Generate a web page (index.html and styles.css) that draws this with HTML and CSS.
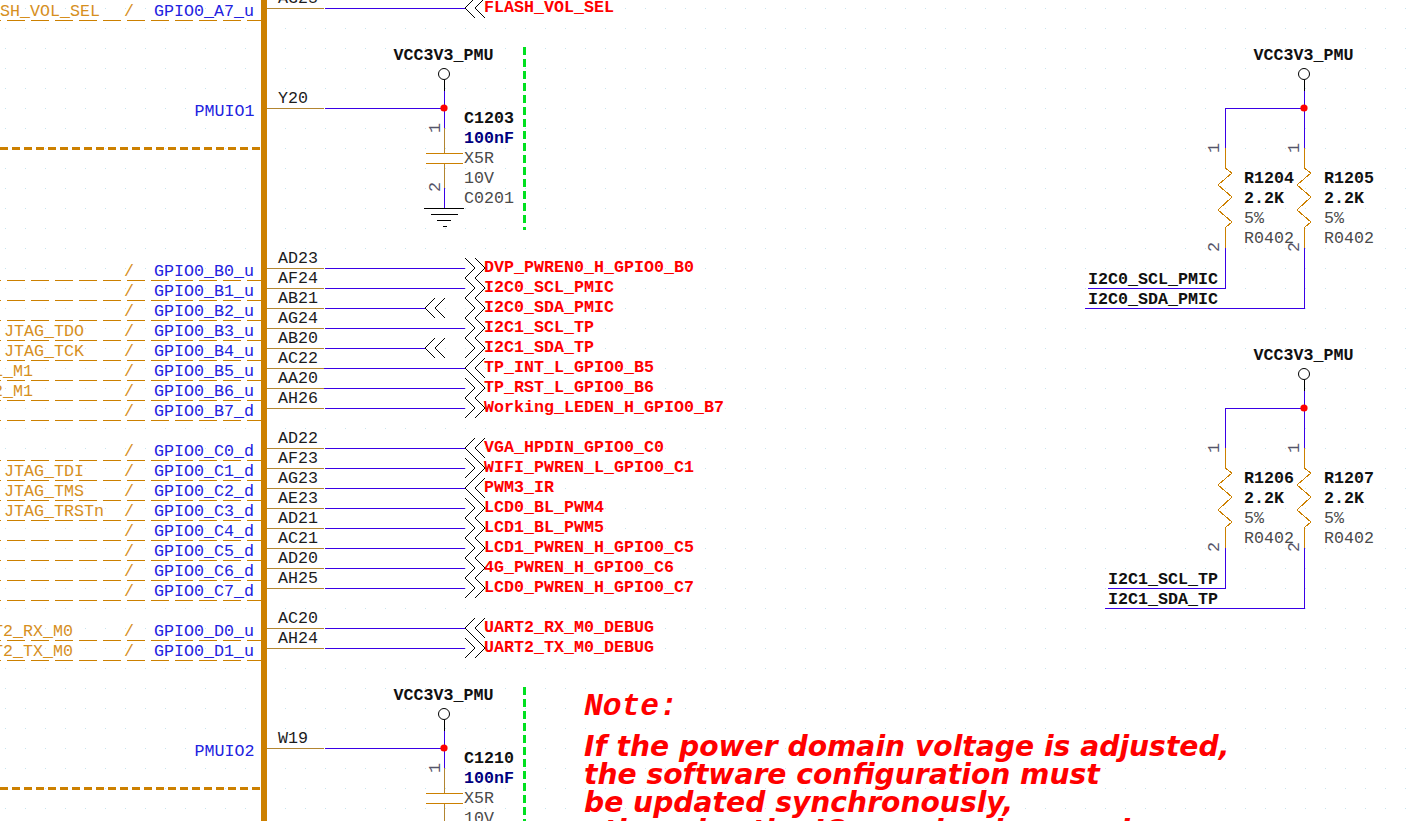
FILE: index.html
```html
<!DOCTYPE html>
<html lang="en">
<head>
<meta charset="utf-8">
<title>Schematic</title>
<link rel="stylesheet" href="styles.css">
</head>
<body>
<svg class="sheet" width="1425" height="821" viewBox="0 0 1425 821" xmlns="http://www.w3.org/2000/svg">
<defs>
<pattern id="grid" x="5" y="8" width="20" height="20" patternUnits="userSpaceOnUse"><rect class="griddot" width="1" height="1"/></pattern>
<g id="cr"><path class="chev" d="M465 -10L475 0L465 10M475 -10L485 0L475 10"/></g>
<g id="cl"><path class="chev" d="M475 -10L465 0L475 10M485 -10L475 0L485 10"/></g>
<g id="cm"><path class="chev" d="M435 -10L425 0L435 10M445 -10L435 0L445 10"/></g>
<g id="dash"><path class="row" d="M-16.7 0H261"/></g>
<g id="res"><path class="comp" d="M0 148V168L7 173L-7 185L7 197L-7 210L7 222L0 228V248"/></g>
</defs>
<rect class="gridfill" width="1425" height="821"/>

<!-- left dashed signal rows -->
<use href="#dash" y="20"/><use href="#dash" y="280"/><use href="#dash" y="300"/><use href="#dash" y="320"/><use href="#dash" y="340"/><use href="#dash" y="360"/><use href="#dash" y="380"/><use href="#dash" y="400"/><use href="#dash" y="420"/><use href="#dash" y="460"/><use href="#dash" y="480"/><use href="#dash" y="500"/><use href="#dash" y="520"/><use href="#dash" y="540"/><use href="#dash" y="560"/><use href="#dash" y="580"/><use href="#dash" y="600"/><use href="#dash" y="640"/><use href="#dash" y="660"/>
<path class="thick" d="M0 148H261M0 788H261"/>

<!-- orange names -->
<g class="t orange">
<text x="-30" y="16">FLASH_VOL_SEL</text>
<text x="4" y="336">JTAG_TDO</text>
<text x="4" y="356">JTAG_TCK</text>
<text x="-37" y="376">PWM1_M1</text>
<text x="-37" y="396">PWM2_M1</text>
<text x="4" y="476">JTAG_TDI</text>
<text x="4" y="496">JTAG_TMS</text>
<text x="4" y="516">JTAG_TRSTn</text>
<text x="-37" y="636">UART2_RX_M0</text>
<text x="-37" y="656">UART2_TX_M0</text>
<text x="124" y="16">/</text>
<text x="124" y="276">/</text><text x="124" y="296">/</text><text x="124" y="316">/</text><text x="124" y="336">/</text><text x="124" y="356">/</text><text x="124" y="376">/</text><text x="124" y="396">/</text><text x="124" y="416">/</text>
<text x="124" y="456">/</text><text x="124" y="476">/</text><text x="124" y="496">/</text><text x="124" y="516">/</text><text x="124" y="536">/</text><text x="124" y="556">/</text><text x="124" y="576">/</text><text x="124" y="596">/</text>
<text x="124" y="636">/</text><text x="124" y="656">/</text>
</g>

<!-- blue GPIO names -->
<g class="t blue">
<text x="154" y="16">GPIO0_A7_u</text>
<text x="194.5" y="116">PMUIO1</text>
<text x="154" y="276">GPIO0_B0_u</text>
<text x="154" y="296">GPIO0_B1_u</text>
<text x="154" y="316">GPIO0_B2_u</text>
<text x="154" y="336">GPIO0_B3_u</text>
<text x="154" y="356">GPIO0_B4_u</text>
<text x="154" y="376">GPIO0_B5_u</text>
<text x="154" y="396">GPIO0_B6_u</text>
<text x="154" y="416">GPIO0_B7_d</text>
<text x="154" y="456">GPIO0_C0_d</text>
<text x="154" y="476">GPIO0_C1_d</text>
<text x="154" y="496">GPIO0_C2_d</text>
<text x="154" y="516">GPIO0_C3_d</text>
<text x="154" y="536">GPIO0_C4_d</text>
<text x="154" y="556">GPIO0_C5_d</text>
<text x="154" y="576">GPIO0_C6_d</text>
<text x="154" y="596">GPIO0_C7_d</text>
<text x="154" y="636">GPIO0_D0_u</text>
<text x="154" y="656">GPIO0_D1_u</text>
<text x="194.5" y="756">PMUIO2</text>
</g>

<!-- package bar and pins -->
<rect class="bar" x="261" y="0" width="6" height="821"/>
<path class="pin" d="M267 8H324M267 108H324M267 268H324M267 288H324M267 308H324M267 328H324M267 348H324M267 368H324M267 388H324M267 408H324M267 448H324M267 468H324M267 488H324M267 508H324M267 528H324M267 548H324M267 568H324M267 588H324M267 628H324M267 648H324M267 748H324"/>
<g class="t dark">
<text x="278" y="3">AG25</text>
<text x="278" y="103">Y20</text>
<text x="278" y="263">AD23</text>
<text x="278" y="283">AF24</text>
<text x="278" y="303">AB21</text>
<text x="278" y="323">AG24</text>
<text x="278" y="343">AB20</text>
<text x="278" y="363">AC22</text>
<text x="278" y="383">AA20</text>
<text x="278" y="403">AH26</text>
<text x="278" y="443">AD22</text>
<text x="278" y="463">AF23</text>
<text x="278" y="483">AG23</text>
<text x="278" y="503">AE23</text>
<text x="278" y="523">AD21</text>
<text x="278" y="543">AC21</text>
<text x="278" y="563">AD20</text>
<text x="278" y="583">AH25</text>
<text x="278" y="623">AC20</text>
<text x="278" y="643">AH24</text>
<text x="278" y="743">W19</text>
</g>

<!-- wires -->
<path class="wire" d="M325 8H465M325 108H444M325 268H465M325 288H465M325 308H425M325 328H465M325 348H425M324 368H465M324 388H465M325 408H465M325 448H465M325 468H465M325 488H465M325 508H465M325 528H465M325 548H465M325 568H465M325 588H465M325 628H465M325 648H465M325 748H444"/>

<!-- off-page connectors -->
<use href="#cl" y="8"/>
<use href="#cr" y="268"/><use href="#cr" y="288"/><use href="#cr" y="308"/><use href="#cm" y="308"/><use href="#cr" y="328"/><use href="#cr" y="348"/><use href="#cm" y="348"/><use href="#cl" y="368"/><use href="#cr" y="388"/><use href="#cr" y="408"/>
<use href="#cl" y="448"/><use href="#cr" y="468"/><use href="#cl" y="488"/><use href="#cr" y="508"/><use href="#cr" y="528"/><use href="#cr" y="548"/><use href="#cr" y="568"/><use href="#cr" y="588"/>
<use href="#cl" y="628"/><use href="#cr" y="648"/>

<g class="t bold red">
<text x="484" y="12">FLASH_VOL_SEL</text>
<text x="484" y="272">DVP_PWREN0_H_GPIO0_B0</text>
<text x="484" y="292">I2C0_SCL_PMIC</text>
<text x="484" y="312">I2C0_SDA_PMIC</text>
<text x="484" y="332">I2C1_SCL_TP</text>
<text x="484" y="352">I2C1_SDA_TP</text>
<text x="484" y="372">TP_INT_L_GPIO0_B5</text>
<text x="484" y="392">TP_RST_L_GPIO0_B6</text>
<text x="484" y="412">Working_LEDEN_H_GPIO0_B7</text>
<text x="484" y="452">VGA_HPDIN_GPIO0_C0</text>
<text x="484" y="472">WIFI_PWREN_L_GPIO0_C1</text>
<text x="484" y="492">PWM3_IR</text>
<text x="484" y="512">LCD0_BL_PWM4</text>
<text x="484" y="532">LCD1_BL_PWM5</text>
<text x="484" y="552">LCD1_PWREN_H_GPIO0_C5</text>
<text x="484" y="572">4G_PWREN_H_GPIO0_C6</text>
<text x="484" y="592">LCD0_PWREN_H_GPIO0_C7</text>
<text x="484" y="632">UART2_RX_M0_DEBUG</text>
<text x="484" y="652">UART2_TX_M0_DEBUG</text>
</g>

<!-- C1203 -->
<g>
<text class="t bold black" x="393.5" y="60">VCC3V3_PMU</text>
<circle class="port" cx="444" cy="74" r="5.5"/>
<path class="black-line" d="M444 80V91"/>
<path class="wire" d="M444 91V128M444 188V208"/>
<path class="pin" d="M444 128V153M444 163V188"/>
<path class="comp" d="M426 153H463M426 163H463"/>
<circle class="junction" cx="444" cy="108" r="3.6"/>
<path class="black-line" d="M424 208H464M431 214H458M437 220H451M443 226H447"/>
<text class="t grey num" transform="translate(440 133) rotate(-90)">1</text>
<text class="t grey num" transform="translate(440 192) rotate(-90)">2</text>
<text class="t bold black" x="464" y="123">C1203</text>
<text class="t bold navy" x="464" y="143">100nF</text>
<text class="t grey" x="464" y="163">X5R</text>
<text class="t grey" x="464" y="183">10V</text>
<text class="t grey" x="464" y="203">C0201</text>
<path class="green" d="M524 47V230"/>
</g>

<!-- C1210 -->
<g>
<text class="t bold black" x="393.5" y="700">VCC3V3_PMU</text>
<circle class="port" cx="444" cy="714" r="5.5"/>
<path class="black-line" d="M444 720V731"/>
<path class="wire" d="M444 731V768"/>
<path class="pin" d="M444 768V793M444 803V821"/>
<path class="comp" d="M426 793H463M426 803H463"/>
<circle class="junction" cx="444" cy="748" r="3.6"/>
<text class="t grey num" transform="translate(440 773) rotate(-90)">1</text>
<text class="t bold black" x="464" y="763">C1210</text>
<text class="t bold navy" x="464" y="783">100nF</text>
<text class="t grey" x="464" y="803">X5R</text>
<text class="t grey" x="464" y="823">10V</text>
<path class="green" d="M524 687V821"/>
</g>

<!-- note -->
<text class="note-head" x="584" y="715">Note:</text>
<g class="note">
<text x="584" y="756">If the power domain voltage is adjusted,</text>
<text x="584" y="784">the software configuration must</text>
<text x="584" y="812">be updated synchronously,</text>
<text x="584" y="840">otherwise the IO may be damaged</text>
</g>

<!-- pull-ups I2C0 -->
<g>
<text class="t bold black" x="1253.5" y="60">VCC3V3_PMU</text>
<circle class="port" cx="1304" cy="74" r="5.5"/>
<path class="black-line" d="M1304 80V91"/>
<path class="wire" d="M1304 91V148M1304 108H1225V148M1225 248V288H1088M1304 248V308H1085"/>
<use href="#res" x="1225"/><use href="#res" x="1304"/>
<circle class="junction" cx="1304" cy="108" r="3.6"/>
<text class="t grey num" transform="translate(1219 153) rotate(-90)">1</text>
<text class="t grey num" transform="translate(1219 252) rotate(-90)">2</text>
<text class="t grey num" transform="translate(1299 153) rotate(-90)">1</text>
<text class="t grey num" transform="translate(1299 252) rotate(-90)">2</text>
<text class="t bold black" x="1244" y="183">R1204</text>
<text class="t bold black" x="1244" y="203">2.2K</text>
<text class="t grey" x="1244" y="223">5%</text>
<text class="t grey" x="1244" y="243">R0402</text>
<text class="t bold black" x="1324" y="183">R1205</text>
<text class="t bold black" x="1324" y="203">2.2K</text>
<text class="t grey" x="1324" y="223">5%</text>
<text class="t grey" x="1324" y="243">R0402</text>
<text class="t bold black" x="1088" y="284">I2C0_SCL_PMIC</text>
<text class="t bold black" x="1088" y="304">I2C0_SDA_PMIC</text>
</g>

<!-- pull-ups I2C1 -->
<g>
<text class="t bold black" x="1253.5" y="360">VCC3V3_PMU</text>
<circle class="port" cx="1304" cy="374" r="5.5"/>
<path class="black-line" d="M1304 380V391"/>
<path class="wire" d="M1304 391V448M1304 408H1225V448M1225 548V588H1108M1304 548V608H1105"/>
<use href="#res" x="1225" y="300"/><use href="#res" x="1304" y="300"/>
<circle class="junction" cx="1304" cy="408" r="3.6"/>
<text class="t grey num" transform="translate(1219 453) rotate(-90)">1</text>
<text class="t grey num" transform="translate(1219 552) rotate(-90)">2</text>
<text class="t grey num" transform="translate(1299 453) rotate(-90)">1</text>
<text class="t grey num" transform="translate(1299 552) rotate(-90)">2</text>
<text class="t bold black" x="1244" y="483">R1206</text>
<text class="t bold black" x="1244" y="503">2.2K</text>
<text class="t grey" x="1244" y="523">5%</text>
<text class="t grey" x="1244" y="543">R0402</text>
<text class="t bold black" x="1324" y="483">R1207</text>
<text class="t bold black" x="1324" y="503">2.2K</text>
<text class="t grey" x="1324" y="523">5%</text>
<text class="t grey" x="1324" y="543">R0402</text>
<text class="t bold black" x="1108" y="584">I2C1_SCL_TP</text>
<text class="t bold black" x="1108" y="604">I2C1_SDA_TP</text>
</g>
</svg>
</body>
</html>
```
FILE: styles.css
```css
html, body {
  margin: 0;
  padding: 0;
  background: #fff;
  overflow: hidden;
}
.sheet {
  display: block;
}
.griddot {
  fill: #c4e6f2;
}
.gridfill {
  fill: url(#grid);
}
.t {
  font-family: "Liberation Mono", "Courier New", monospace;
  font-size: 16.667px;
}
.bold {
  font-weight: 700;
}
.orange { fill: #d68f1e; }
.blue { fill: #2222e0; }
.dark { fill: #1c1c1c; }
.red { fill: #ff0000; }
.black { fill: #111; }
.navy { fill: #000080; }
.grey { fill: #4a4a4a; }
.num { fill: #55556a; }

.row, .thick, .pin, .wire, .comp, .chev, .black-line, .green {
  fill: none;
  shape-rendering: crispEdges;
}
.row {
  stroke: #cc8000;
  stroke-width: 1;
  stroke-dasharray: 17.3 6.7;
}
.thick {
  stroke: #cc8000;
  stroke-width: 3;
  stroke-dasharray: 8 4;
}
.bar {
  fill: #cc8000;
}
.pin {
  stroke: #b28530;
  stroke-width: 1;
}
.wire {
  stroke: #3a00e6;
  stroke-width: 1;
}
.comp {
  stroke: #cc8000;
  stroke-width: 1;
}
.chev, .black-line {
  stroke: #000;
  stroke-width: 1;
}
.green {
  stroke: #00e020;
  stroke-width: 3;
  stroke-dasharray: 8 4;
}
.port {
  fill: #fff;
  stroke: #000;
  stroke-width: 1;
}
.junction {
  fill: #ff0000;
}
.note-head {
  font-family: "Liberation Mono", monospace;
  font-size: 31.3px;
  font-weight: 700;
  font-style: italic;
  fill: #ff0000;
}
.note text {
  font-family: "DejaVu Sans", sans-serif;
  font-size: 28.2px;
  font-weight: 700;
  font-style: italic;
  fill: #ff0000;
}
```
